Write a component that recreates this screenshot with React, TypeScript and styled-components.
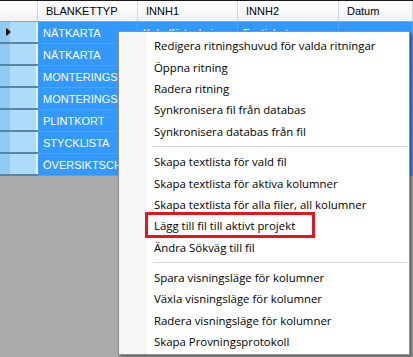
import React from "react";
import styled, { createGlobalStyle } from "styled-components";

const Global = createGlobalStyle`
  html, body { margin: 0; padding: 0; }
  body {
    width: 413px;
    height: 357px;
    overflow: hidden;
    background: #ababab;
    font-family: "Liberation Sans", Arial, sans-serif;
  }
`;

const Page = styled.div`
  position: relative;
  width: 413px;
  height: 357px;
  background: #ababab;
  overflow: hidden;
`;

const Grid = styled.div`
  display: flex;
  flex-direction: column;
  border-top: 1px solid #1a1a1a;
`;

const HeaderRow = styled.div`
  display: grid;
  grid-template-columns: 38px 100px 100px 101px 1fr;
  height: 20px;
  background: linear-gradient(#ffffff, #f1f2f4);
  border-bottom: 1px solid #9aa0a6;
`;

const HeaderCell = styled.div`
  display: flex;
  align-items: center;
  padding-left: 8px;
  font-size: 11px;
  color: #000;
  border-right: 1px solid #d5d5d5;
  white-space: nowrap;
  overflow: hidden;
`;

const Row = styled.div`
  display: grid;
  grid-template-columns: 38px 100px 100px 101px 1fr;
  height: 22px;
`;

const RowHead = styled.div`
  display: flex;
  align-items: center;
  background: linear-gradient(to right, #8fcbf1 0 10px, #acdcf8 10px 36px, #e6f4fc 36px 38px);
  border-bottom: 2px solid #5a86a6;
  box-sizing: border-box;
`;

const Arrow = styled.div`
  margin-left: 6px;
  width: 0;
  height: 0;
  border-top: 4px solid transparent;
  border-bottom: 4px solid transparent;
  border-left: 5px solid #000;
`;

const Cell = styled.div`
  display: flex;
  align-items: center;
  padding-left: 5px;
  background: #3399ff;
  color: #fff;
  font-size: 11px;
  border-right: 1px solid #4ea6ff;
  border-bottom: 1px solid #49a4ff;
  box-sizing: border-box;
  white-space: nowrap;
  overflow: hidden;
`;

const Menu = styled.div`
  position: absolute;
  left: 118px;
  top: 31px;
  width: 292px;
  box-sizing: border-box;
  padding: 3px 2px 2px 2px;
  background: linear-gradient(to right, #f6f6f6 0 28px, #ffffff 28px);
  border: 1px solid #8f8f8f;
  box-shadow: 2px 2px 3px rgba(0, 0, 0, 0.45);
  display: flex;
  flex-direction: column;
`;

const Item = styled.div<{ $marked?: boolean }>`
  position: relative;
  height: 21.4px;
  display: flex;
  align-items: center;
  padding-left: 33px;
  font-family: "Open Sans", "Noto Sans", sans-serif;
  font-size: 11.4px;
  color: #000;
  white-space: nowrap;
  &::after {
    content: "";
    display: ${(p) => (p.$marked ? "block" : "none")};
    position: absolute;
    left: 24px;
    top: -3px;
    width: 170px;
    height: 26px;
    box-sizing: border-box;
    border: 3px solid #e3161f;
  }
`;

const Separator = styled.div`
  height: 9px;
  display: flex;
  align-items: center;
  padding-left: 32px;
  &::before {
    content: "";
    flex: 1;
    height: 1px;
    background: #d7d7d7;
  }
`;

const headers = ["", "BLANKETTYP", "INNH1", "INNH2", "Datum"];

const rows = [
  ["NÄTKARTA", "Kabelförteckning", "Fastighet", ""],
  ["NÄTKARTA", "", "", ""],
  ["MONTERINGSIN", "", "", ""],
  ["MONTERINGSIN", "", "", ""],
  ["PLINTKORT", "", "", ""],
  ["STYCKLISTA", "", "", ""],
  ["ÖVERSIKTSCH", "", "", ""],
];

type Entry = { label?: string; sep?: boolean; marked?: boolean };

const menu: Entry[] = [
  { label: "Redigera ritningshuvud för valda ritningar" },
  { label: "Öppna ritning" },
  { label: "Radera ritning" },
  { label: "Synkronisera fil från databas" },
  { label: "Synkronisera databas från fil" },
  { sep: true },
  { label: "Skapa textlista för vald fil" },
  { label: "Skapa textlista för aktiva kolumner" },
  { label: "Skapa textlista för alla filer, all kolumner" },
  { label: "Lägg till fil till aktivt projekt", marked: true },
  { label: "Ändra Sökväg till fil" },
  { sep: true },
  { label: "Spara visningsläge för kolumner" },
  { label: "Växla visningsläge för kolumner" },
  { label: "Radera visningsläge för kolumner" },
  { label: "Skapa Provningsprotokoll" },
];

export default function App() {
  return (
    <Page>
      <Global />
      <Grid>
        <HeaderRow>
          {headers.map((h, i) => (
            <HeaderCell key={i}>{h}</HeaderCell>
          ))}
        </HeaderRow>
        {rows.map((r, i) => (
          <Row key={i}>
            <RowHead>{i === 0 && <Arrow />}</RowHead>
            {r.map((c, j) => (
              <Cell key={j}>{c}</Cell>
            ))}
          </Row>
        ))}
      </Grid>
      <Menu>
        {menu.map((m, i) =>
          m.sep ? (
            <Separator key={i} />
          ) : (
            <Item key={i} $marked={m.marked}>
              {m.label}
            </Item>
          )
        )}
      </Menu>
    </Page>
  );
}
